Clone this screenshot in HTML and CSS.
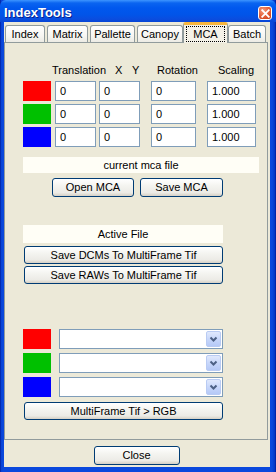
FILE: index.html
```html
<!DOCTYPE html>
<html>
<head>
<meta charset="utf-8">
<title>IndexTools</title>
<link rel="stylesheet" href="styles.css">
</head>
<body>
<div class="window">
  <div class="titlebar">
    <span class="title">IndexTools</span>
    <span class="xbtn"><svg width="9" height="9" viewBox="0 0 9 9"><path d="M1.2 1.2L7.8 7.8M7.8 1.2L1.2 7.8" stroke="#fff" stroke-width="1.8" stroke-linecap="square"/></svg></span>
  </div>
  <div class="client">
    <div class="tabs">
      <div class="tab t-index">Index</div>
      <div class="tab t-matrix">Matrix</div>
      <div class="tab t-pal">Pallette</div>
      <div class="tab t-can">Canopy</div>
      <div class="tab t-mca sel"><span class="focus">MCA</span></div>
      <div class="tab t-batch">Batch</div>
    </div>
    <div class="panel">
      <div class="hdr">
        <span class="h-trans">Translation</span>
        <span class="h-x">X</span>
        <span class="h-y">Y</span>
        <span class="h-rot">Rotation</span>
        <span class="h-scal">Scaling</span>
      </div>
      <div class="row first">
        <div class="sw red"></div>
        <div class="tb w1">0</div>
        <div class="tb w2">0</div>
        <div class="tb w3">0</div>
        <div class="tb w4">1.000</div>
      </div>
      <div class="row">
        <div class="sw green"></div>
        <div class="tb w1">0</div>
        <div class="tb w2">0</div>
        <div class="tb w3">0</div>
        <div class="tb w4">1.000</div>
      </div>
      <div class="row">
        <div class="sw blue"></div>
        <div class="tb w1">0</div>
        <div class="tb w2">0</div>
        <div class="tb w3">0</div>
        <div class="tb w4">1.000</div>
      </div>
      <div class="strip mca-file">current mca file</div>
      <div class="btnrow">
        <div class="btn b-open">Open MCA</div>
        <div class="btn b-save">Save MCA</div>
      </div>
      <div class="strip active-file">Active File</div>
      <div class="btn wide b-dcm">Save DCMs To MultiFrame Tif</div>
      <div class="btn wide b-raw">Save RAWs To MultiFrame Tif</div>
      <div class="crow c-first">
        <div class="sw red"></div>
        <div class="combo"><span class="arrow"><svg width="9" height="7" viewBox="0 0 9 7"><path d="M1.5 1.5L4.5 4.5L7.5 1.5" fill="none" stroke="#4D6185" stroke-width="2"/></svg></span></div>
      </div>
      <div class="crow">
        <div class="sw green"></div>
        <div class="combo"><span class="arrow"><svg width="9" height="7" viewBox="0 0 9 7"><path d="M1.5 1.5L4.5 4.5L7.5 1.5" fill="none" stroke="#4D6185" stroke-width="2"/></svg></span></div>
      </div>
      <div class="crow">
        <div class="sw blue"></div>
        <div class="combo"><span class="arrow"><svg width="9" height="7" viewBox="0 0 9 7"><path d="M1.5 1.5L4.5 4.5L7.5 1.5" fill="none" stroke="#4D6185" stroke-width="2"/></svg></span></div>
      </div>
      <div class="btn wide b-rgb">MultiFrame Tif &gt; RGB</div>
    </div>
    <div class="footer">
      <div class="btn b-close">Close</div>
    </div>
  </div>
</div>
</body>
</html>
```

FILE: styles.css
```css
* { box-sizing: border-box; }
html, body { margin: 0; padding: 0; }
body {
  width: 276px;
  height: 472px;
  overflow: hidden;
  font-family: "Liberation Sans", Arial, sans-serif;
  font-size: 11px;
  color: #000;
  background: #0831A8;
}
.window {
  width: 276px;
  height: 472px;
  display: flex;
  flex-direction: column;
  background: linear-gradient(to right, #00138C 0, #0842D4 1px, #0A48DD 3px, #0A48DD 272px, #0336C4 275px, #00138C 276px);
}
.titlebar {
  height: 22px;
  flex: none;
  display: flex;
  align-items: center;
  padding-left: 4px;
  background: linear-gradient(to bottom, #3D95FF 0, #0A64F0 3px, #0058EE 8px, #0154E8 15px, #0A4DDF 19px, #0745D6 22px);
  border-radius: 6px 6px 0 0;
}
.title {
  font-family: "Liberation Sans", Arial, sans-serif;
  font-weight: bold;
  font-size: 13px;
  color: #fff;
  text-shadow: 1px 1px 0 #0A1E8C;
  margin-top: 2px;
}
.xbtn {
  margin-left: auto;
  margin-right: 4px;
  margin-top: 4px;
  width: 14px;
  height: 14px;
  border: 1px solid #fff;
  border-radius: 3px;
  background: radial-gradient(circle at 35% 30%, #F39A7C 0, #E25A34 55%, #C53A12 100%);
  display: flex;
  align-items: center;
  justify-content: center;
}
.client {
  flex: 1;
  display: flex;
  flex-direction: column;
  margin: 0 6px 5px 4px;
  background: #ECE9D8;
}
.tabs {
  height: 20px;
  display: flex;
  align-items: flex-end;
  padding-left: 1px;
  flex: none;
}
.tab {
  height: 17px;
  border: 1px solid #919B9C;
  border-bottom: none;
  border-radius: 3px 3px 0 0;
  background: linear-gradient(to bottom, #FFFFFF 0, #F7F6F2 60%, #ECEBE4 100%);
  text-align: center;
  line-height: 15px;
  padding-top: 1px;
  margin-right: 2px;
}
.t-index { width: 40px; }
.t-matrix { width: 41px; }
.t-pal { width: 45px; }
.t-can { width: 46px; margin-right: 0; }
.t-mca { width: 45px; margin-right: 0; }
.t-batch { width: 38px; }
.tab.sel {
  height: 21px;
  margin-bottom: -1px;
  position: relative;
  z-index: 1;
  background: #F4F2E8;
  border-top: 3px solid #F7B63E;
  padding-top: 0;
  line-height: 16px;
}
.focus {
  display: inline-block;
  border: 1px dotted #000;
  padding: 0 6px;
  line-height: 14px;
  margin-top: 1px;
}
.panel {
  height: 398px;
  margin-right: 2px;
  flex: none;
  border: 1px solid #919B9C;
  background: #ECE9D8;
  padding-left: 18px;
  display: flex;
  flex-direction: column;
}
.hdr {
  display: flex;
  margin-top: 20px;
  height: 14px;
  line-height: 14px;
  padding-left: 29px;
}
.h-trans { width: 63px; }
.h-x { width: 17px; }
.h-y { width: 25px; }
.h-rot { width: 61px; }
.row {
  display: flex;
  height: 20px;
  margin-top: 3px;
}
.row.first { margin-top: 4px; }
.sw { width: 28px; height: 20px; flex: none; }
.red { background: #FF0000; }
.green { background: #00C000; }
.blue { background: #0000FF; }
.tb {
  height: 20px;
  border: 1px solid #7F9DB9;
  background: #fff;
  padding-left: 4px;
  line-height: 18px;
  flex: none;
}
.w1 { width: 41px; margin-left: 4px; }
.w2 { width: 41px; margin-left: 3px; }
.w3 { width: 45px; margin-left: 11px; }
.w4 { width: 49px; margin-left: 11px; }
.strip {
  background: #FFFEF6;
  text-align: center;
}
.mca-file {
  width: 236px;
  height: 16px;
  line-height: 16px;
  margin-top: 10px;
}
.btnrow {
  display: flex;
  margin-top: 5px;
  padding-left: 29px;
}
.btn {
  height: 19px;
  border: 1px solid #003C74;
  border-radius: 3px;
  background: linear-gradient(to bottom, #FFFFFF 0, #F4F4F0 40%, #ECEBE6 80%, #D6D0C5 100%);
  text-align: center;
  line-height: 17px;
  flex: none;
}
.b-open { width: 82px; }
.b-save { width: 83px; margin-left: 6px; }
.active-file {
  width: 200px;
  height: 18px;
  line-height: 18px;
  margin-top: 28px;
}
.wide {
  width: 199px;
  height: 18px;
  line-height: 16px;
  margin-left: 1px;
}
.b-dcm { margin-top: 3px; }
.b-raw { margin-top: 2px; }
.crow {
  display: flex;
  height: 20px;
  margin-top: 4px;
}
.crow.c-first { margin-top: 45px; }
.combo {
  width: 164px;
  height: 20px;
  margin-left: 8px;
  border: 1px solid #7F9DB9;
  background: #fff;
  display: flex;
  justify-content: flex-end;
  padding: 1px;
}
.arrow {
  width: 15px;
  height: 16px;
  border-radius: 2px;
  border: 1px solid #B9CBF3;
  background: linear-gradient(to bottom, #E0E9FD 0, #C8D7FA 50%, #B5C9F7 100%);
  display: flex;
  align-items: center;
  justify-content: center;
}
.b-rgb { margin-top: 5px; }
.footer {
  flex: 1;
  display: flex;
  justify-content: center;
  padding-top: 6px;
  padding-right: 3px;
}
.b-close {
  width: 86px;
  height: 19px;
  margin-left: 2px;
}
```
